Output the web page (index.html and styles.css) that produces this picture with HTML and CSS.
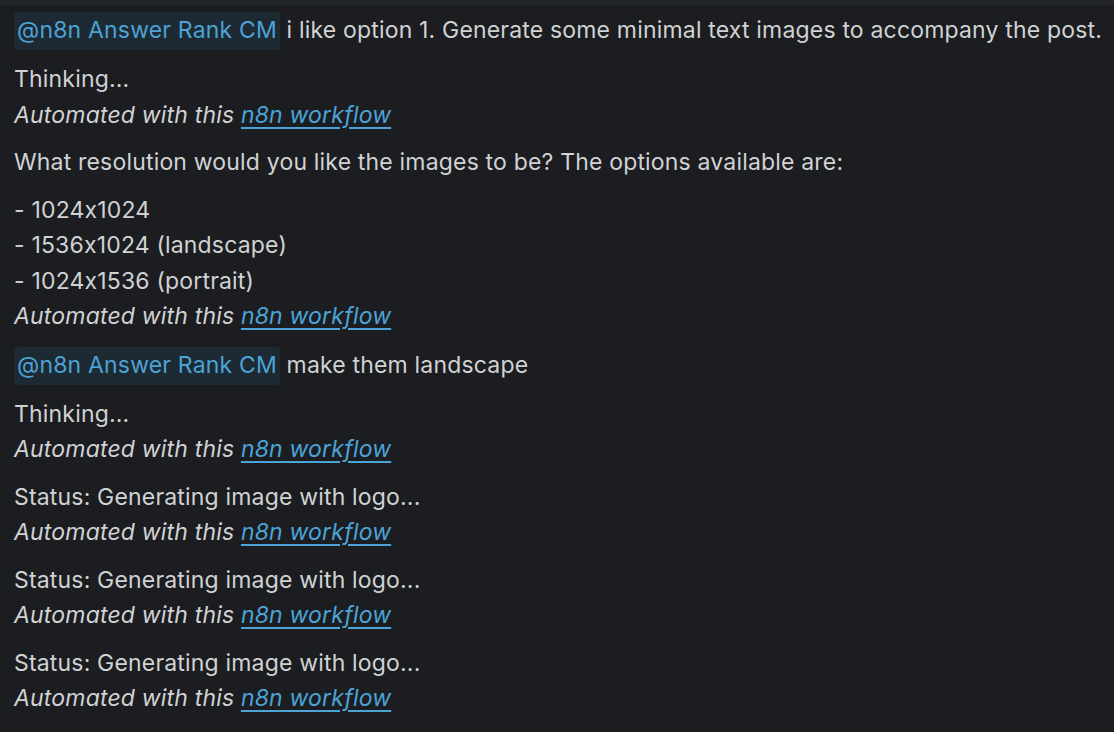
FILE: index.html
```html
<!DOCTYPE html>
<html>
<head>
    <title>Channel thread</title>
    <link rel="stylesheet" href="styles.css">
</head>
<body>
    <div class="top-strip"></div>
    <div class="messages">
        <div class="message">
            <span class="mention">@n8n Answer Rank CM</span> i like option 1. Generate some minimal text images to accompany the post.
        </div>
        <div class="message">
            <div>Thinking...</div>
            <div class="footer-note">Automated with this <a href="#">n8n workflow</a></div>
        </div>
        <div class="message">
            <div class="para">What resolution would you like the images to be? The options available are:</div>
            <div>- 1024x1024</div>
            <div>- 1536x1024 (landscape)</div>
            <div>- 1024x1536 (portrait)</div>
            <div class="footer-note">Automated with this <a href="#">n8n workflow</a></div>
        </div>
        <div class="message">
            <span class="mention">@n8n Answer Rank CM</span> make them landscape
        </div>
        <div class="message">
            <div>Thinking...</div>
            <div class="footer-note">Automated with this <a href="#">n8n workflow</a></div>
        </div>
        <div class="message">
            <div>Status: Generating image with logo...</div>
            <div class="footer-note">Automated with this <a href="#">n8n workflow</a></div>
        </div>
        <div class="message">
            <div>Status: Generating image with logo...</div>
            <div class="footer-note">Automated with this <a href="#">n8n workflow</a></div>
        </div>
        <div class="message">
            <div>Status: Generating image with logo...</div>
            <div class="footer-note">Automated with this <a href="#">n8n workflow</a></div>
        </div>
    </div>
</body>
</html>
```

FILE: styles.css
```css
body {
    margin: 0;
    background-color: #1b1d21;
    color: #d1d2d3;
    font-family: Inter, "Noto Sans", sans-serif;
    font-feature-settings: "calt" 0;
    font-size: 23px;
    letter-spacing: 0.18px;
    line-height: 35.5px;
    overflow: hidden;
}
.top-strip {
    height: 5px;
    background-color: #222529;
}
.messages {
    padding: 7px 0 0 14px;
}
.message {
    margin-bottom: 12px;
    white-space: nowrap;
}
.para {
    margin-bottom: 12px;
}
.mention {
    display: inline-block;
    padding: 0 3px 1px;
    line-height: 37px;
    background-color: #1e2a33;
    color: #4ba3d6;
    border-radius: 4px;
}
.footer-note {
    font-style: italic;
}
.footer-note a {
    color: #4ba3d6;
    text-decoration: underline;
    text-underline-offset: 4px;
}
```
